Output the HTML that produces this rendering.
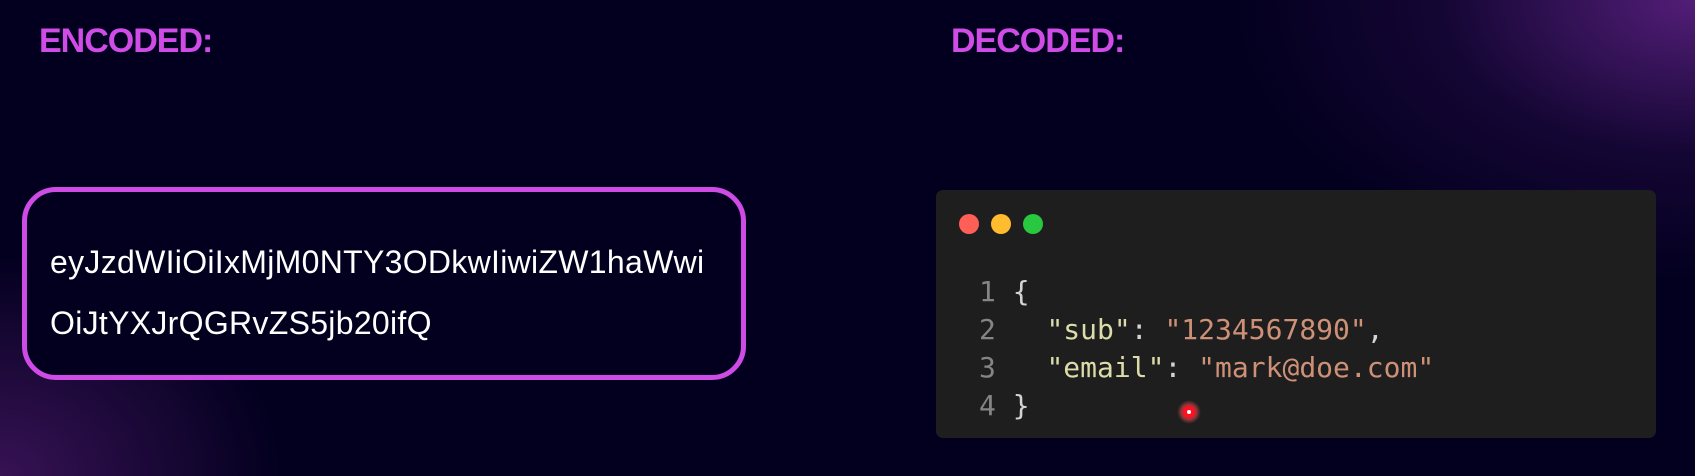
<!DOCTYPE html>
<html><head><style>
html,body{margin:0;padding:0}
body{width:1695px;height:476px;overflow:hidden;position:relative;background:#03001f;
background-image:radial-gradient(ellipse 460px 280px at 1695px 0px,rgba(110,40,150,0.75),rgba(60,20,100,0.3) 55%,rgba(3,0,31,0) 100%),
radial-gradient(ellipse 280px 220px at 0px 476px,rgba(90,30,120,0.6),rgba(3,0,31,0) 100%);
font-family:"Liberation Sans",sans-serif}
.h{position:absolute;top:22px;color:#d04ce6;font-weight:bold;font-size:34px;letter-spacing:-1px}
.box{position:absolute;left:22px;top:187px;width:714px;height:183px;border:5px solid #cf4be6;border-radius:34px;background:#02001e}
.enc{position:absolute;left:50px;color:#fff;font-size:32px;letter-spacing:0.3px}
.code{position:absolute;left:936px;top:190px;width:720px;height:248px;background:#1e1e1e;border-radius:7px}
.dot{position:absolute;top:214px;width:20px;height:20px;border-radius:50%}
.ln{position:absolute;font-family:"DejaVu Sans Mono",monospace;font-size:28px;color:#d4d4d4;white-space:pre;line-height:38px}
.n{color:#858585}.k{color:#dcdcaa}.s{color:#ce9178}
</style></head><body>
<div class="h" style="left:39px">ENCODED:</div>
<div class="h" style="left:951px">DECODED:</div>
<div class="box"></div>
<div class="enc" style="top:244px">eyJzdWIiOiIxMjM0NTY3ODkwIiwiZW1haWwi</div>
<div class="enc" style="top:305px">OiJtYXJrQGRvZS5jb20ifQ</div>
<div class="code"></div>
<div class="dot" style="left:959px;background:#fe5f57"></div>
<div class="dot" style="left:991px;background:#febc2e"></div>
<div class="dot" style="left:1023px;background:#28c840"></div>
<div class="ln" style="left:979px;top:273px"><span class="n">1</span> {
<span class="n">2</span>   <span class="k">"sub"</span>: <span class="s">"1234567890"</span>,
<span class="n">3</span>   <span class="k">"email"</span>: <span class="s">"mark@doe.com"</span>
<span class="n">4</span> }</div>
<div style="position:absolute;left:1177px;top:400px;width:24px;height:24px;border-radius:50%;background:radial-gradient(circle,#ff1020 0 30%,rgba(255,80,90,0.5) 45%,rgba(255,80,90,0) 70%)"></div>
<div style="position:absolute;left:1187px;top:410px;width:4px;height:4px;border-radius:50%;background:#fff"></div>
</body></html>
